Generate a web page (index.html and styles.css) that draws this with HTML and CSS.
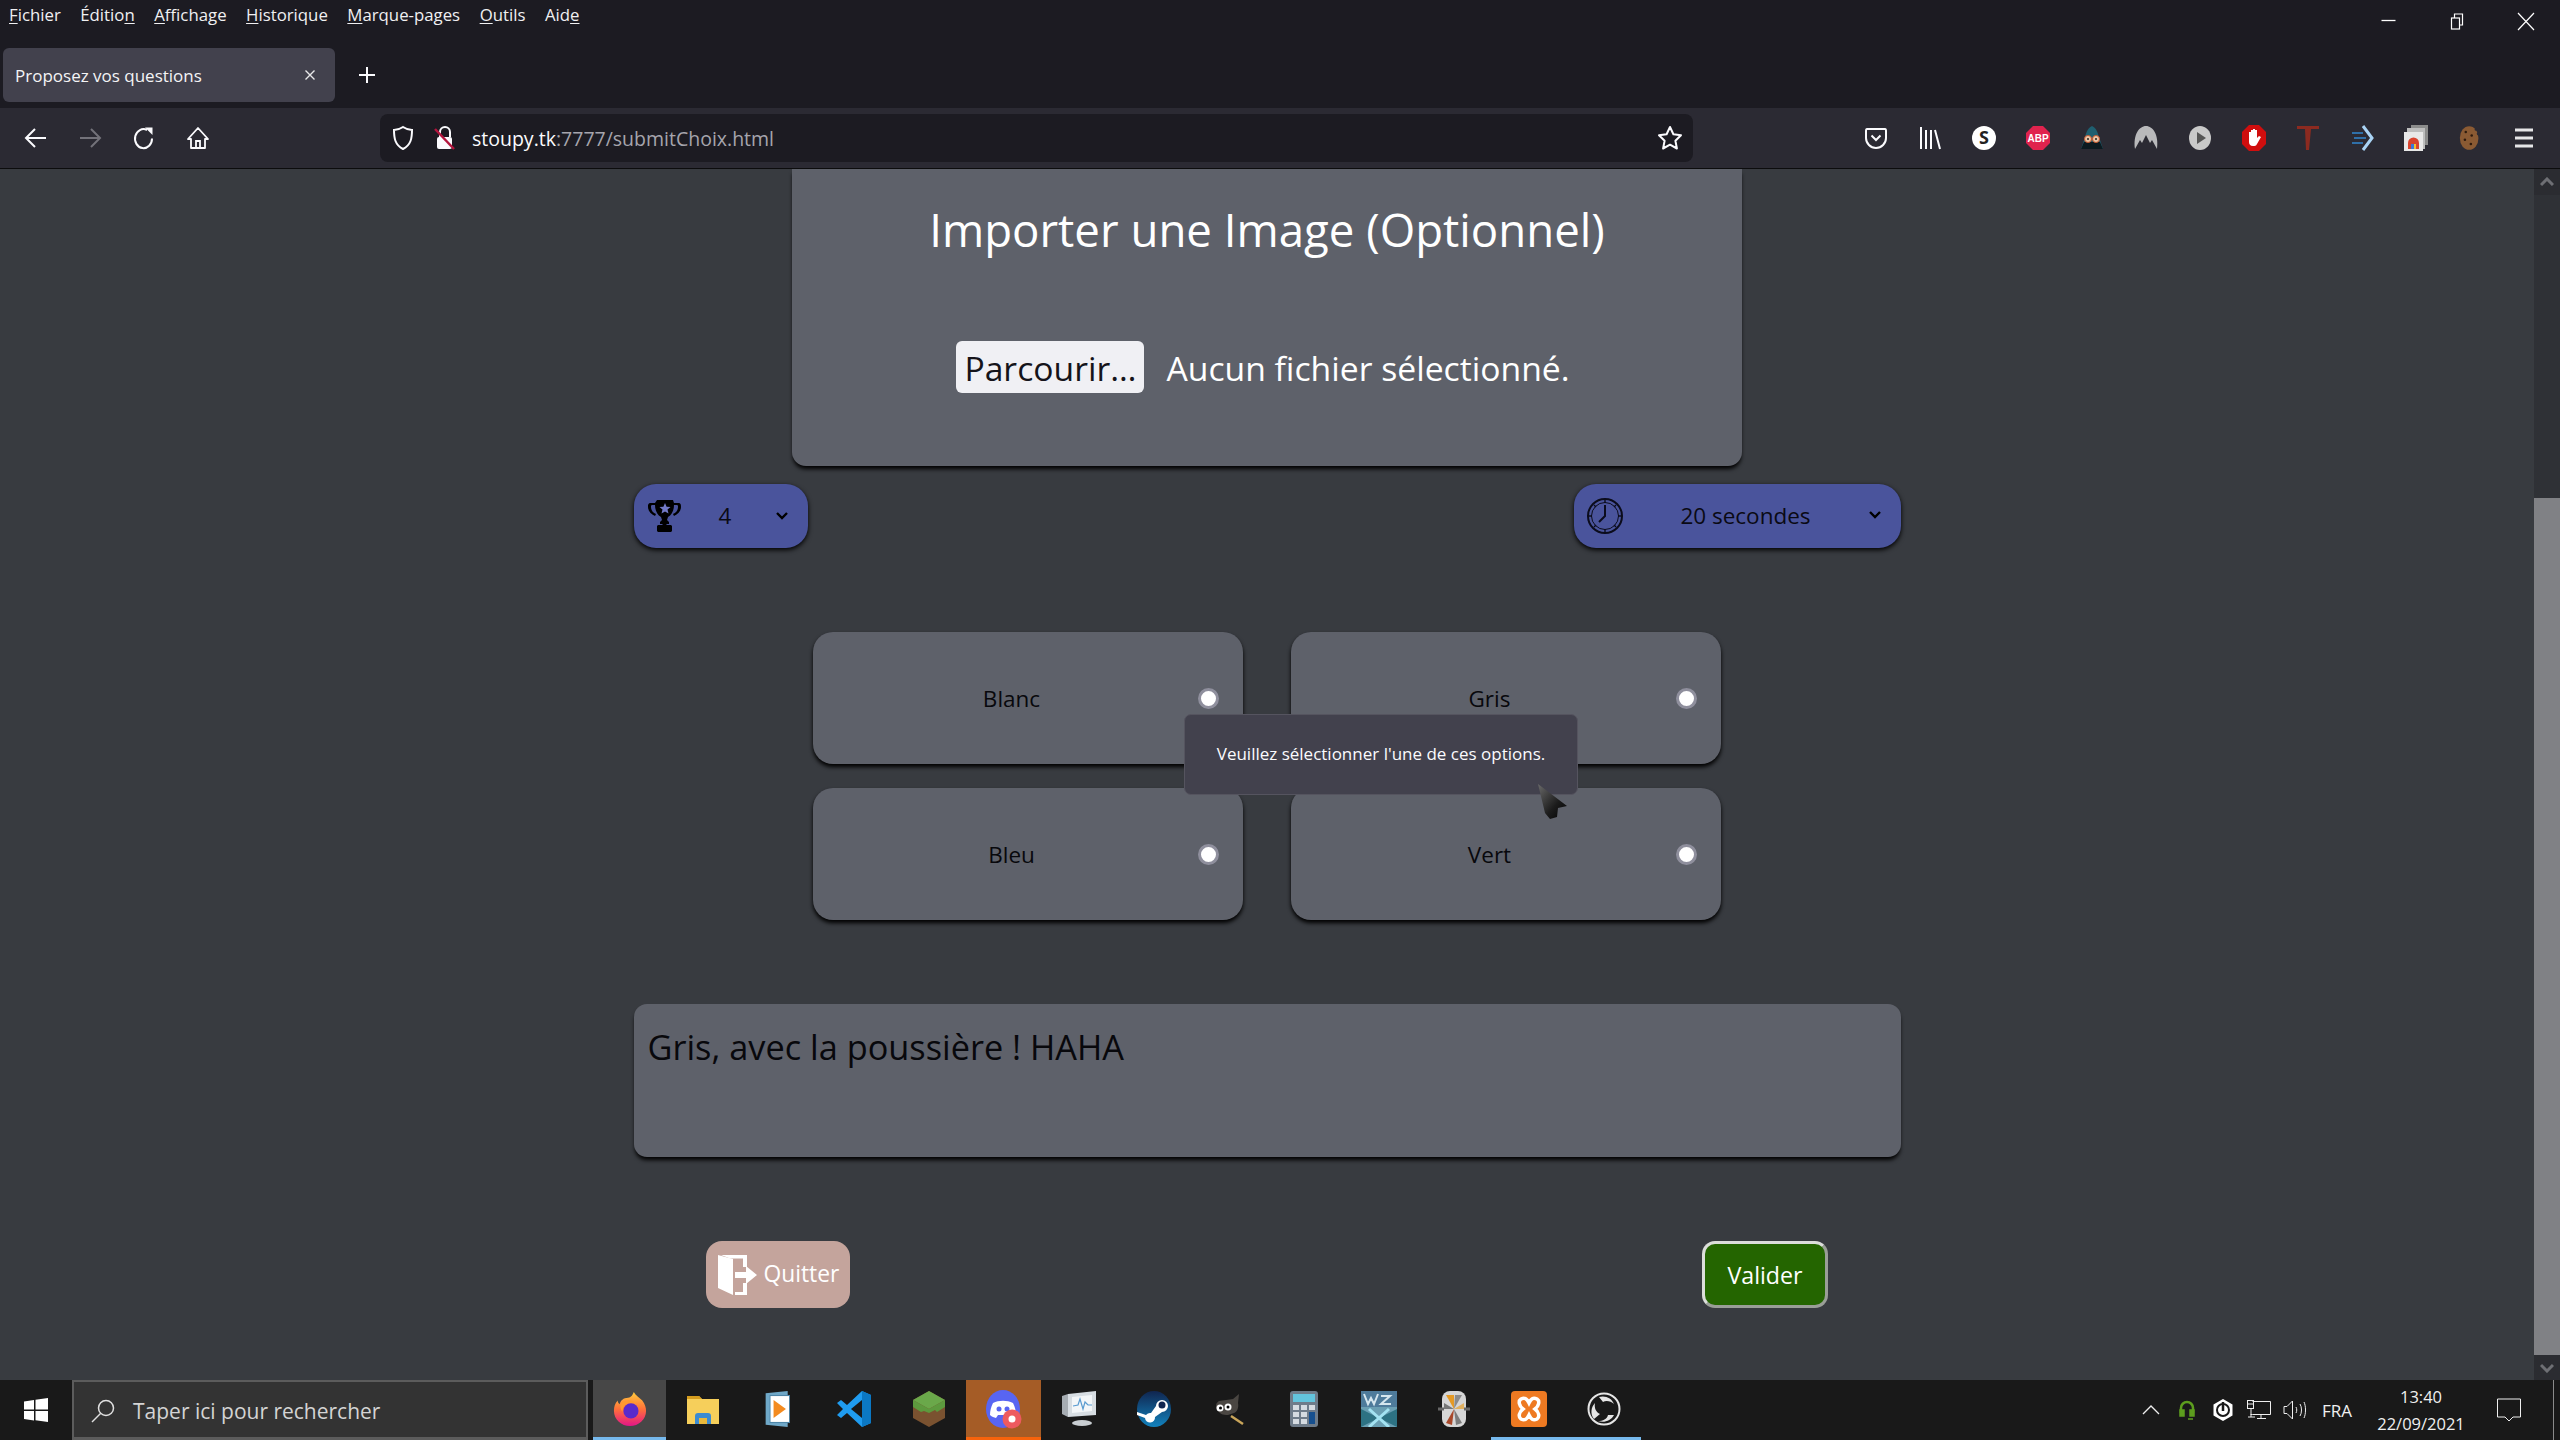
FILE: index.html
```html
<!DOCTYPE html>
<html lang="fr">
<head>
<meta charset="utf-8">
<title>Proposez vos questions</title>
<link rel="stylesheet" href="styles.css">
</head>
<body>
<div class="screen">
  <header class="chrome-top">
    <div class="menu-row">
      <nav class="menu">
        <span><u>F</u>ichier</span><span>Éditio<u>n</u></span><span><u>A</u>ffichage</span><span><u>H</u>istorique</span><span><u>M</u>arque-pages</span><span><u>O</u>utils</span><span>Aid<u>e</u></span>
      </nav>
      <div class="win-controls">
        <svg width="68" height="40" viewBox="0 0 68 40"><path d="M25.500 20.500h14" stroke="#fff" stroke-width="1.3"/></svg>
        <svg width="68" height="40" viewBox="0 0 68 40" fill="none" stroke="#fff" stroke-width="1.2"><rect x="27.500" y="18" width="8" height="11"/><path d="M30.500 18v-4h8v11h-3"/></svg>
        <svg width="68" height="40" viewBox="0 0 68 40"><path d="M26 13l16 17M42 13L26 30" stroke="#fff" stroke-width="1.2"/></svg>
      </div>
    </div>
    <div class="tab-row">
      <div class="tab"><span class="tab-title">Proposez vos questions</span>
        <svg width="12" height="12" viewBox="0 0 12 12"><path d="M1.500 1.500l9 9M10.500 1.500l-9 9" stroke="#e8e8ea" stroke-width="1.400"/></svg>
      </div>
      <svg class="newtab" width="18" height="18" viewBox="0 0 18 18"><path d="M9 1v16M1 9h16" stroke="#fbfbfe" stroke-width="2"/></svg>
    </div>
  </header>

  <div class="toolbar">
    <div class="nav-buttons">
      <span class="tb"><svg width="24" height="24" viewBox="0 0 24 24" fill="none" stroke="#fbfbfe" stroke-width="2"><path d="M22 12H2M11 3l-9 9 9 9"/></svg></span>
      <span class="tb"><svg width="24" height="24" viewBox="0 0 24 24" fill="none" stroke="#73727a" stroke-width="2"><path d="M2 12h20M13 3l9 9-9 9"/></svg></span>
      <span class="tb"><svg width="24" height="24" viewBox="0 0 24 24" fill="none" stroke="#fbfbfe" stroke-width="2"><path d="M20 12.500A8.500 9.500 0 1 1 15 4"/><path d="M13 1.500h7.500V9z" fill="#fbfbfe" stroke="none"/></svg></span>
      <span class="tb"><svg width="24" height="24" viewBox="0 0 24 24" fill="none" stroke="#fbfbfe" stroke-width="1.800"><path d="M12 2L2 13h3v9h14v-9h3z" stroke-linejoin="round"/><path d="M10 22v-7h4v7"/></svg></span>
    </div>
    <div class="urlbar">
      <svg class="shield" width="22" height="26" viewBox="0 0 22 26" fill="none" stroke="#fbfbfe" stroke-width="2"><path d="M11 2C8 4 5 5 2 5c0 8 1 15 9 19 8-4 9-11 9-19-3 0-6-1-9-3z"/></svg>
      <svg class="lock" width="22" height="26" viewBox="0 0 22 26"><path d="M6 12V7a5 5 0 0 1 10 0v5" fill="none" stroke="#fbfbfe" stroke-width="2"/><rect x="3" y="12" width="15" height="12" rx="2" fill="#fbfbfe"/><path d="M1 4l19 20" stroke="#b3163e" stroke-width="2.500"/></svg>
      <span class="url"><span class="url-host">stoupy.tk</span>:7777/submitChoix.html</span>
      <svg class="star" width="26" height="26" viewBox="0 0 26 26" fill="none" stroke="#fbfbfe" stroke-width="2" stroke-linejoin="round"><path d="M13 2l3.400 7.200 7.600 1-5.600 5.500 1.500 7.800-6.900-3.800-6.900 3.800 1.500-7.800L2 10.200l7.600-1z"/></svg>
    </div>
    <div class="extensions">
      <span class="tb"><svg width="24" height="24" viewBox="0 0 24 24" fill="none" stroke="#fbfbfe" stroke-width="2"><path d="M3 3h18c1 0 1 1 1 2v7a10 10 0 0 1-20 0V5c0-1 0-2 1-2z"/><path d="M7.500 9.500L12 14l4.500-4.500"/></svg></span>
      <span class="tb"><svg width="24" height="24" viewBox="0 0 24 24" stroke="#fbfbfe" stroke-width="2"><path d="M3 1v22M8 4v19M13 4v19M17 4l5 19"/></svg></span>
      <span class="tb"><svg width="26" height="26" viewBox="0 0 26 26"><circle cx="13" cy="13" r="12" fill="#fff"/><text x="13" y="19" class="svg-s">S</text></svg></span>
      <span class="tb"><svg width="26" height="26" viewBox="0 0 26 26"><path d="M8 1h10l7 7v10l-7 7H8l-7-7V8z" fill="#e0234e"/><text x="13" y="17" class="svg-abp">ABP</text></svg></span>
      <span class="tb"><svg width="26" height="26" viewBox="0 0 26 26"><path d="M13 1c5 2 6 8 8 14l3 9H2l3-9c2-6 3-12 8-14z" fill="#1f5f70"/><path d="M5 17h16l3 7H2z" fill="#0c1a20"/><circle cx="9" cy="14" r="3.500" fill="#e9c7a8" stroke="#c8552a"/><circle cx="17" cy="14" r="3.500" fill="#e9c7a8" stroke="#c8552a"/><circle cx="9" cy="14" r="1" fill="#222"/><circle cx="17" cy="14" r="1" fill="#222"/></svg></span>
      <span class="tb"><svg width="26" height="26" viewBox="0 0 26 26"><path d="M2 24C0 10 6 1 13 1s13 9 11 23l-5-9-2 3-4-8-4 8-2-3z" fill="#b9b9bb"/></svg></span>
      <span class="tb"><svg width="24" height="26" viewBox="0 0 24 26"><ellipse cx="12" cy="13" rx="11" ry="12" fill="#c9c9c9"/><path d="M9 7l9 6-9 6z" fill="#555"/></svg></span>
      <span class="tb"><svg width="26" height="28" viewBox="0 0 26 28"><path d="M8 1h10l7 7v12l-7 7H8l-7-7V8z" fill="#d00e0e"/><path d="M8 13V8h2v4-6h2v6-7h2v7-6h2v8l2-2 2 1-4 7c-1 2-2 2-4 2-3 0-4-2-4-4z" fill="#fff"/></svg></span>
      <span class="tb"><svg width="26" height="28" viewBox="0 0 26 28"><path d="M2 2h22v3h-8l-2 21h-3L10 5H2z" fill="#8c2a20"/></svg></span>
      <span class="tb"><svg width="26" height="28" viewBox="0 0 26 28" fill="none"><path d="M14 2l9 12-9 12" stroke="#a9d3f5" stroke-width="3"/><path d="M3 9h11M5 14h12M3 19h11" stroke="#2f6fa8" stroke-width="2"/></svg></span>
      <span class="tb"><svg width="26" height="28" viewBox="0 0 26 28"><rect x="8" y="1" width="17" height="20" fill="#8c8c8c"/><rect x="4" y="4" width="18" height="21" fill="#bdbdbd"/><rect x="1" y="8" width="19" height="19" fill="#e8e8e8"/><path d="M5 25v-6a5.500 5.500 0 0 1 11 0v6h-3v-5h-5v5z" fill="#d9442f"/><path d="M8 25v-5h3v5z" fill="#3d78d8"/><path d="M11 25v-5h2v5z" fill="#f3bf2c"/></svg></span>
      <span class="tb"><svg width="22" height="30" viewBox="0 0 26 30"><ellipse cx="12" cy="15" rx="11" ry="14" fill="#8a5a33"/><circle cx="8" cy="8" r="1.500" fill="#2c1a0e"/><circle cx="15" cy="12" r="1.500" fill="#2c1a0e"/><circle cx="7" cy="17" r="1.500" fill="#2c1a0e"/><circle cx="14" cy="22" r="1.500" fill="#2c1a0e"/><circle cx="20" cy="5" r="1.500" fill="#2b2a33"/><circle cx="23" cy="10" r="2" fill="#2b2a33"/></svg></span>
      <span class="tb"><svg width="24" height="24" viewBox="0 0 24 24" stroke="#e6e6e8" stroke-width="3"><path d="M3 4h18M3 12h18M3 20h18"/></svg></span>
    </div>
  </div>

  <div class="viewport">
    <main class="page">
      <section class="upload-card">
        <h1 class="upload-title">Importer une Image (Optionnel)</h1>
        <div class="file-row">
          <button class="file-btn">Parcourir…</button>
          <span class="file-name">Aucun fichier sélectionné.</span>
        </div>
      </section>

      <div class="select-row">
        <div class="select select-points">
          <svg class="trophy" width="34" height="34" viewBox="0 0 34 34"><path d="M9 1h16l1 3h4c3 0 3 2 3 4 0 4-3 7-7 9l-1-2c3-1 5-4 5-7 0-1 0-2-1-2h-3c0 5-2 10-6 12l-1 3 2 2v2h-2l-1 1h5l1 1v5l-1 1H10l-1-1v-5l1-1h5l-1-1h-2v-2l2-2-1-3c-4-2-6-7-6-12H4c-1 0-1 1-1 2 0 3 2 6 5 7l-1 2c-4-2-7-5-7-9 0-2 0-4 3-4h4z" fill="#000"/><path d="M17 4l1.600 3.700 3.900.3-3 2.600 1 3.900-3.500-2.100-3.500 2.100 1-3.900-3-2.600 3.900-.3z" fill="#7279c6"/></svg>
          <span class="select-value">4</span>
          <svg class="chevron" width="14" height="10" viewBox="0 0 14 10"><path d="M2 2l5 5 5-5" fill="none" stroke="#000" stroke-width="2.400"/></svg>
        </div>
        <div class="select select-time">
          <svg width="38" height="38" viewBox="0 0 38 38" fill="none" stroke="#0b0c1c"><circle cx="19" cy="19" r="17" stroke-width="2"/><circle cx="19" cy="19" r="13.500" stroke-width="1"/><path d="M19 8v11l-6 6" stroke-width="2"/><path d="M19 3v3M19 32v3M3 19h3M32 19h3M8 8l2 2M28 28l2 2M8 30l2-2M28 10l2-2" stroke-width="1.400"/></svg>
          <span class="select-value time-value">20 secondes</span>
          <svg class="chevron chevron-time" width="14" height="10" viewBox="0 0 14 10"><path d="M2 2l5 5 5-5" fill="none" stroke="#000" stroke-width="2.400"/></svg>
        </div>
      </div>

      <div class="options">
        <label class="option"><span class="option-label">Blanc</span><span class="radio"></span></label>
        <label class="option"><span class="option-label">Gris</span><span class="radio"></span></label>
        <label class="option"><span class="option-label">Bleu</span><span class="radio"></span></label>
        <label class="option"><span class="option-label">Vert</span><span class="radio"></span></label>
        <div class="tooltip">Veuillez sélectionner l'une de ces options.</div>
        <svg class="cursor" width="32" height="38" viewBox="0 0 32 38"><defs><linearGradient id="cur" x1="0" y1="0" x2="1" y2="1"><stop offset="0" stop-color="#6a6a6a"/><stop offset=".6" stop-color="#1c1c1c"/><stop offset="1" stop-color="#000"/></linearGradient></defs><path d="M1 1l29 22-9 2-1 9-7 2-5-6z" fill="url(#cur)"/></svg>
      </div>

      <div class="answer">Gris, avec la poussière ! HAHA</div>

      <div class="actions">
        <button class="quit">
          <svg width="40" height="40" viewBox="0 0 40 40"><path d="M0 0l15 4v36L0 33z" fill="#fff"/><path d="M3 0h26v12h-4V3.500H12zM29 28v12H17v-3h8v-9z" fill="#fff"/><path d="M17 17h11v-6l11 9-11 9v-6H17z" fill="#fff"/></svg>
          <span>Quitter</span>
        </button>
        <button class="submit">Valider</button>
      </div>
    </main>
    <aside class="scrollbar">
      <span class="sb-btn"><svg width="14" height="10" viewBox="0 0 14 10"><path d="M1 8l6-6 6 6" fill="none" stroke="#6e6f74" stroke-width="3"/></svg></span>
      <span class="sb-space"></span>
      <span class="sb-thumb"></span>
      <span class="sb-btn sb-btn-down"><svg width="14" height="10" viewBox="0 0 14 10"><path d="M1 2l6 6 6-6" fill="none" stroke="#6e6f74" stroke-width="3"/></svg></span>
    </aside>
  </div>

  <footer class="taskbar">
    <span class="start"><svg width="26" height="26" viewBox="0 0 26 26" fill="#fff"><path d="M1 4.500l10-1.500v9.500H1zM12.500 2.800L25 1v11.500H12.500zM1 14h10v9.500L1 22zM12.500 14H25v11l-12.500-1.800z"/></svg></span>
    <div class="search">
      <svg width="26" height="26" viewBox="0 0 26 26" fill="none" stroke="#e0e0e0" stroke-width="1.500"><circle cx="16" cy="10" r="7.500"/><path d="M10.500 15.500L2 24"/></svg>
      <span>Taper ici pour rechercher</span>
    </div>
    <div class="tasks">
      <span class="task task-s task-active">
        <svg width="34" height="38" viewBox="0 0 36 38"><defs><linearGradient id="ff" x1="0" y1="0" x2="0" y2="1"><stop offset="0" stop-color="#ffcb3d"/><stop offset=".5" stop-color="#ff7139"/><stop offset="1" stop-color="#e31587"/></linearGradient></defs><path d="M22 1c2 4 6 6 9 9 3 4 4 8 4 11 0 9-8 16-17 16S1 30 1 21c0-4 1-8 4-11 0 2 1 3 2 4 1-4 4-7 9-7 3 0 5-3 6-6z" fill="url(#ff)"/><circle cx="19" cy="21" r="8" fill="#592acb"/><path d="M9 12c4-3 12-3 16 1-4-1-9-1-11 1-3 2-4 5-4 8-2-3-3-7-1-10z" fill="#ff9a2e"/></svg>
      </span>
      <span class="task task-s">
        <svg width="34" height="32" viewBox="0 0 34 32"><path d="M1 3h12l3 3h17v25H1z" fill="#f6cf5b"/><path d="M1 3h12l3 3H1z" fill="#d49c1e"/><path d="M9 31v-8a3 3 0 0 1 3-3h10a3 3 0 0 1 3 3v8h-4v-6h-8v6z" fill="#3b8bd1"/><rect x="13" y="25" width="8" height="6" fill="#e8b83b"/></svg>
      </span>
      <span class="task task-w">
        <svg width="30" height="36" viewBox="0 0 34 32" preserveAspectRatio="none"><path d="M3 2l25-2v32L3 30z" fill="#6fa8c8"/><rect x="8" y="4" width="22" height="24" fill="#fff" stroke="#4e86a8"/><path d="M12 8l14 8-14 8z" fill="#f48b1f"/></svg>
      </span>
      <span class="task">
        <svg width="34" height="36" viewBox="0 0 34 36"><path d="M25 0l9 4v28l-9 4L10 22l-6 5-4-3 6-6-6-6 4-3 6 5z" fill="#1f9cf0"/><path d="M25 9v18l-11-9z" fill="#191919"/><path d="M25 0l9 4v28l-9 4z" fill="#0b78c4"/></svg>
      </span>
      <span class="task">
        <svg width="34" height="38" viewBox="0 0 34 38"><path d="M17 1l16 9v18l-16 9L1 28V10z" fill="#7a5230"/><path d="M17 1l16 9-16 9L1 10z" fill="#6aa84a"/><path d="M1 10l16 9v4l-5-2-3 1-8-5zM33 10L17 19v4l6-3 2 2 8-5z" fill="#5d9a3e"/></svg>
      </span>
      <span class="task task-discord">
        <svg width="38" height="40" viewBox="0 0 38 40"><ellipse cx="18" cy="20" rx="17" ry="19" fill="#5865f2"/><path d="M8 14c6-3 14-3 20 0 2 4 3 8 3 12-2 2-4 2-6 3l-2-3h-10l-2 3c-2-1-4-1-6-3 0-4 1-8 3-12z" fill="#fff"/><circle cx="14" cy="20" r="2.500" fill="#5865f2"/><circle cx="22" cy="20" r="2.500" fill="#5865f2"/><circle cx="27" cy="30" r="9.500" fill="#ed5a5f"/><circle cx="27" cy="30" r="3.500" fill="#fff"/></svg>
      </span>
      <span class="task">
        <svg width="34" height="36" viewBox="0 0 34 36"><path d="M6 3l28-3v24L6 26z" fill="#d7dde2"/><path d="M10 6l20-2v16l-20 2z" fill="#f3f6f8"/><path d="M11 15l5-1 2-6 3 10 2-7 3 3h4" fill="none" stroke="#5a9bd0" stroke-width="1.200"/><path d="M0 5l6-2v23l-6-3z" fill="#a6acb2"/><ellipse cx="20" cy="32" rx="10" ry="3" fill="#c9ced2"/></svg>
      </span>
      <span class="task">
        <svg width="36" height="38" viewBox="0 0 36 38"><defs><linearGradient id="st" x1="0" y1="0" x2="0" y2="1"><stop offset="0" stop-color="#10254f"/><stop offset="1" stop-color="#1282bd"/></linearGradient></defs><ellipse cx="18" cy="19" rx="17" ry="18" fill="url(#st)"/><path d="M1 22l9 3c2-2 4-2 5-2l5-7a6 6 0 1 1 6 6l-7 5a5 5 0 0 1-10 1l-8-3z" fill="#fff"/><circle cx="26" cy="15" r="3.500" fill="#10254f"/></svg>
      </span>
      <span class="task">
        <svg width="36" height="36" viewBox="0 0 36 36"><path d="M8 10l14-2 6-5-1 9c1 5-1 9-4 10l-6 2c-5 0-9-1-11-6-2-3-1-6 2-8z" fill="#4a4642"/><circle cx="9" cy="17" r="3.500" fill="#fff"/><circle cx="17" cy="16" r="3.500" fill="#fff"/><circle cx="9.500" cy="17" r="1.500" fill="#000"/><circle cx="17" cy="16" r="1.500" fill="#000"/><path d="M20 25l12 8" stroke="#c9a55a" stroke-width="2.500"/></svg>
      </span>
      <span class="task">
        <svg width="28" height="36" viewBox="0 0 28 36"><rect width="28" height="36" rx="3" fill="#6f7c8a"/><rect x="3" y="3" width="22" height="8" fill="#63c4dd"/><g fill="#d5dbe1"><rect x="3" y="14" width="6" height="5"/><rect x="11" y="14" width="6" height="5"/><rect x="19" y="14" width="6" height="5"/><rect x="3" y="21" width="6" height="5"/><rect x="11" y="21" width="6" height="5"/><rect x="3" y="28" width="6" height="5"/><rect x="11" y="28" width="6" height="5"/></g><rect x="19" y="21" width="6" height="12" fill="#17508f"/></svg>
      </span>
      <span class="task">
        <svg width="36" height="36" viewBox="0 0 36 36"><rect width="36" height="36" fill="#6a9fb3"/><rect y="0" width="36" height="16" fill="#4e7b9b"/><path d="M3 3l4 10 3-6 3 6 4-10M20 5h9l-9 8h10" fill="none" stroke="#d5e6ee" stroke-width="2"/><path d="M0 18l18 9 18-9v18L18 27 0 36z" fill="#2d7283"/><path d="M8 18l10 9 10-9M8 36l10-9 10 9" fill="none" stroke="#a3e3f2" stroke-width="3"/></svg>
      </span>
      <span class="task">
        <svg width="32" height="36" viewBox="0 0 32 36"><rect x="4" width="24" height="36" rx="8" fill="#d6d6d6"/><path d="M16 18L8 4h8z" fill="#e59a25"/><path d="M16 18l8-14h-7z" fill="#8b8b8b"/><path d="M16 18L6 12v6z" fill="#777"/><path d="M16 18l10-6v6z" fill="#e0b060"/><path d="M16 18L8 32l6 2z" fill="#a8482a"/><path d="M16 18l8 14-6 2z" fill="#7c7c7c"/><path d="M0 18h6M26 18h6" stroke="#666" stroke-width="3"/></svg>
      </span>
      <span class="task task-open">
        <svg width="36" height="36" viewBox="0 0 36 36"><rect width="36" height="36" rx="4" fill="#ee7a22"/><path d="M10 8c4-2 6 0 8 4 2-4 4-6 8-4 3 2 2 7-2 10 4 3 5 8 2 10-4 2-6 0-8-4-2 4-4 6-8 4-3-2-2-7 2-10-4-3-5-8-2-10z" fill="none" stroke="#fff" stroke-width="3.500"/></svg>
      </span>
      <span class="task task-open">
        <svg width="34" height="34" viewBox="0 0 34 34" fill="none" stroke="#e5e5e5"><circle cx="17" cy="17" r="15.500" stroke-width="2"/><path d="M12 5c6-2 13 1 15 7-3-3-8-4-11-2zM7 27c-4-5-3-12 1-16-1 5 1 9 5 11zM27 23c-3 6-10 8-16 6 5 0 9-2 10-6z" fill="#e5e5e5" stroke="none"/></svg>
      </span>
    </div>
    <div class="tray">
      <svg class="t-up" width="18" height="10" viewBox="0 0 18 10"><path d="M1 9l8-8 8 8" fill="none" stroke="#eee" stroke-width="1.300"/></svg>
      <svg class="t-head" width="16" height="20" viewBox="0 0 16 20" fill="none" stroke="#5d9e1e" stroke-width="2.500"><path d="M2 13V8a6 6 0 0 1 12 0v5"/><path d="M1 10h4v6H1zM11 10h4v6h-4zM9 19h5" fill="#5d9e1e" stroke-width="1.500"/></svg>
      <svg class="t-power" width="22" height="22" viewBox="0 0 22 22"><path d="M11 0l9.500 5.500v11L11 22l-9.500-5.500v-11z" fill="#fff"/><circle cx="11" cy="11" r="6" fill="none" stroke="#1a1a1a" stroke-width="2"/><path d="M11 3v9" stroke="#1a1a1a" stroke-width="2.500"/></svg>
      <svg class="t-net" width="24" height="20" viewBox="0 0 24 20" fill="none" stroke="#eee" stroke-width="1"><path d="M5.500 1.500h18v13h-18M3.500 14.500h2M4 9v8M1 17h7M14 15v3M10 18.500h9"/><rect x=".5" y=".5" width="6" height="8"/><path d="M.5 4h6"/></svg>
      <svg class="t-vol" width="24" height="20" viewBox="0 0 24 20" fill="none" stroke="#eee" stroke-width="1"><path d="M1 6.500h3L9.500 1v18L4 13.500H1zM13 7c1 2 1 4 0 6M17 4c2 3 2 9 0 12M21 2c2 4 2 12 0 16"/></svg>
      <span class="t-lang">FRA</span>
      <span class="t-clock"><span>13:40</span><span>22/09/2021</span></span>
      <svg class="t-note" width="24" height="24" viewBox="0 0 24 24"><path d="M.5 1h23v18H16l-4 4-4-4H.5z" fill="none" stroke="#eee" stroke-width="1"/></svg>
      <span class="t-desktop"></span>
    </div>
  </footer>
</div>
</body>
</html>
```

FILE: styles.css
```css
* { box-sizing: border-box; }
html, body { margin: 0; padding: 0; }
body { font-family: "Open Sans", "Noto Sans", sans-serif; background: #383b40; }
.screen { width: 2560px; height: 1440px; display: flex; flex-direction: column; overflow: hidden; }
svg { display: block; flex: none; }
.svg-s { font: 700 18px "Open Sans", sans-serif; text-anchor: middle; fill: #222; }
.svg-abp { font: 700 10px "Liberation Sans", sans-serif; text-anchor: middle; fill: #fff; }

.chrome-top { height: 108px; background: #1c1b22; color: #fbfbfe; flex: none; }
.menu-row { height: 48px; display: flex; justify-content: space-between; align-items: flex-start; }
.menu { display: flex; gap: 19.500px; padding-left: 9px; font-size: 16.800px; line-height: 30px; color: #f0f0f2; }
.menu u { text-underline-offset: 2px; }
.win-controls { display: flex; }
.tab-row { display: flex; align-items: center; height: 54px; padding-left: 3px; }
.tab { width: 332px; height: 54px; background: #42414d; border-radius: 6px; display: flex; align-items: center; justify-content: space-between; padding: 0 19px 0 12px; }
.tab-title { font-size: 17px; color: #f4f4f6; }
.newtab { margin-left: 23px; }

.toolbar { height: 61px; flex: none; background: #2b2a33; border-bottom: 1px solid #0c0c0d; display: flex; align-items: center; padding-left: 9px; }
.tb { width: 54px; height: 48px; display: flex; align-items: center; justify-content: center; }
.nav-buttons { display: flex; width: 371px; }
.urlbar { width: 1313px; height: 48px; background: #1c1b22; border-radius: 8px; display: flex; align-items: center; padding: 0 10px 0 12px; }
.lock { margin-left: 20px; }
.url { margin-left: 16px; padding-top: 2px; font-size: 19.500px; line-height: 30px; color: #a6a5ad; white-space: nowrap; }
.url-host { color: #fbfbfe; }
.star { margin-left: auto; }
.extensions { display: flex; margin-left: 156px; }

.viewport { flex: 1; display: flex; min-height: 0; }
.page { flex: 1; display: flex; flex-direction: column; align-items: center; background: #383b40; }
.upload-card { width: 950px; height: 297px; background: #5e616a; border-radius: 0 0 14px 14px; box-shadow: 0 4px 4px -1px #000; display: flex; flex-direction: column; align-items: center; color: #fff; }
.upload-title { margin: 27px 0 0; font-size: 45.600px; line-height: 66px; font-weight: 400; }
.file-row { margin-top: 79px; display: flex; align-items: center; gap: 22px; margin-left: -8px; font-size: 33.700px; }
.file-name { padding-top: 2px; }
.file-btn { width: 188px; height: 52px; padding: 2px 0 0; border: 0; border-radius: 6px; background: #f0f0f4; color: #15141a; font: inherit; }

.select-row { width: 1267px; margin-top: 18px; display: flex; justify-content: space-between; }
.select { height: 64px; border-radius: 22px; background: #4a549c; box-shadow: 0 2px 5px #000; display: flex; align-items: center; color: #0a0a14; font-size: 22.500px; }
.select-points { width: 174px; padding: 0 19px 0 14px; }
.select-points .select-value { margin-left: 37px; flex: 1; }
.select-time { width: 327px; padding: 0 19px 0 12px; }
.time-value { flex: 1; text-align: center; }
.select-value { line-height: 1; }
.chevron-time { margin-top: -2px; }

.options { position: relative; margin-top: 84px; display: grid; grid-template-columns: 430px 430px; grid-auto-rows: 132px; column-gap: 48px; row-gap: 24px; }
.option { background: #5e616a; border-radius: 20px; box-shadow: 0 3px 4px #000; display: flex; align-items: center; padding: 0 24px 0 12px; color: #08080c; font-size: 22.500px; }
.option-label { flex: 1; text-align: center; padding-top: 1px; }
.radio { width: 21px; height: 21px; border-radius: 50%; background: #fff; border: 3px solid #8f8f9d; flex: none; }
.tooltip { position: absolute; left: 371px; top: 82px; width: 394px; height: 81px; padding-bottom: 2px; background: #42414d; border: 1px solid #55545f; border-radius: 7px; display: flex; align-items: center; justify-content: center; color: #fbfbfe; font-size: 17px; }
.cursor { position: absolute; left: 724px; top: 151px; }

.answer { width: 1267px; height: 153px; margin-top: 84px; background: #5e616a; border-radius: 13px; box-shadow: 0 4px 4px -1px #000; padding: 19px 14px; font-size: 34.300px; line-height: 48px; color: #08080c; }

.actions { width: 1267px; margin-top: 84px; padding: 0 73px 0 72px; display: flex; justify-content: space-between; }
.quit { width: 144px; height: 67px; border: 0; border-radius: 16px; background: #c4a49c; color: #fff; display: flex; align-items: center; padding: 0 0 3px 12px; gap: 6px; font: 400 22.800px "Open Sans", sans-serif; }
.quit svg { margin-top: 3px; }
.submit { width: 126px; height: 67px; border: 3px solid; border-color: #dcdedb #9a9e97 #9a9e97 #dcdedb; border-radius: 13px; background: #246500; color: #fff; font: 400 23.200px "Open Sans", sans-serif; padding: 0 0 0 1px; }

.scrollbar { width: 26px; background: #2f3136; display: flex; flex-direction: column; flex: none; }
.sb-btn { height: 26px; background: #2b2c31; display: flex; align-items: center; justify-content: center; flex: none; }
.sb-btn-down { height: 25px; }
.sb-space { height: 303px; flex: none; }
.sb-thumb { flex: 1; background: #808185; }

.taskbar { height: 60px; flex: none; background: #191919; display: flex; align-items: stretch; color: #f0f0f0; }
.start { width: 72px; display: flex; align-items: center; justify-content: center; }
.search { width: 516px; background: #333; border: 2px solid #5c5c5c; border-bottom-width: 3px; display: flex; align-items: center; gap: 17px; padding: 2px 0 0 16px; font-size: 21px; color: #d4d4d4; }
.tasks { margin-left: 5px; display: flex; }
.task { width: 75px; display: flex; align-items: center; justify-content: center; border-bottom: 3px solid transparent; padding-top: 1px; }
.task-s { width: 73px; }
.task-w { width: 77px; }
.task-active { background: #474747; border-bottom-color: #76b9ed; }
.task-discord { width: 75px; background: #a55c26; border-bottom-color: #f7630c; }
.task-open { border-bottom-color: #76b9ed; }
.tray { flex: 1; position: relative; display: flex; align-items: center; }
.t-up { margin-left: 501px; }
.t-head { margin-left: 19px; }
.t-power { margin-left: 17px; }
.t-net { margin-left: 13px; }
.t-vol { margin-left: 12px; }
.t-lang { margin-left: 15px; font-size: 17px; }
.t-clock { margin-left: 19px; width: 100px; display: flex; flex-direction: column; align-items: center; font-size: 16.500px; line-height: 27px; }
.t-note { margin-left: 26px; }
.t-desktop { position: absolute; right: 6px; top: 0; bottom: 0; width: 1px; background: #8a8a8a; }
```
